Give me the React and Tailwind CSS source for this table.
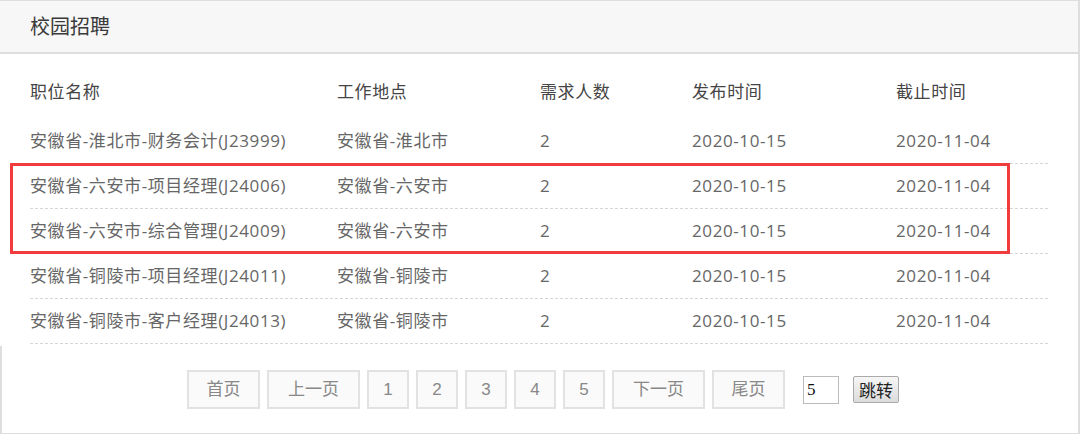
import React from "react";

const cols = ["w-[307px]", "w-[203px]", "w-[152px]", "w-[204px]", "w-[152px]"];

const jobs = [
  ["安徽省-淮北市-财务会计(J23999)", "安徽省-淮北市", "2", "2020-10-15", "2020-11-04"],
  ["安徽省-六安市-项目经理(J24006)", "安徽省-六安市", "2", "2020-10-15", "2020-11-04"],
  ["安徽省-六安市-综合管理(J24009)", "安徽省-六安市", "2", "2020-10-15", "2020-11-04"],
  ["安徽省-铜陵市-项目经理(J24011)", "安徽省-铜陵市", "2", "2020-10-15", "2020-11-04"],
  ["安徽省-铜陵市-客户经理(J24013)", "安徽省-铜陵市", "2", "2020-10-15", "2020-11-04"],
];

const pages = [
  { label: "首页", w: "w-[73px]" },
  { label: "上一页", w: "w-[93px]" },
  { label: "1", w: "w-[42px]" },
  { label: "2", w: "w-[42px]" },
  { label: "3", w: "w-[42px]" },
  { label: "4", w: "w-[42px]" },
  { label: "5", w: "w-[42px]" },
  { label: "下一页", w: "w-[93px]" },
  { label: "尾页", w: "w-[73px]" },
];

export default function App() {
  return (
    <div className="w-[1080px] h-[434px] bg-white font-['Segoe_UI','Open_Sans','Noto_Sans_CJK_SC',sans-serif]">
      <div className="h-[434px] border-t border-r-2 border-b border-[#dedede] flex flex-col">
        <div className="h-[53px] bg-[#f7f7f7] border-b-2 border-[#dedede] flex items-center pl-[30px]">
          <span className="text-[20px] text-[#3a3a3a]">校园招聘</span>
        </div>

        <div className="relative mx-[30px] mt-[16px] text-[17px] tracking-[0.6px]">
          <div className="flex h-[49px] items-center pb-[6px] text-[#444]">
            <div className={cols[0]}>职位名称</div>
            <div className={cols[1]}>工作地点</div>
            <div className={cols[2]}>需求人数</div>
            <div className={cols[3]}>发布时间</div>
            <div className={cols[4]}>截止时间</div>
          </div>
          {jobs.map((row, i) => (
            <div
              key={i}
              className="flex h-[45px] items-center border-b border-dashed border-[#d6d6d6] text-[#666]"
            >
              {row.map((cell, j) => (
                <div key={j} className={cols[j]}>
                  {cell}
                </div>
              ))}
            </div>
          ))}
          <div className="absolute left-[-20px] top-[93px] w-[1000px] h-[91px] border-[3px] border-[#f03c3c] pointer-events-none" />
        </div>

        <div className="flex-1 border-l-2 border-[#dedede] mt-[2px] flex items-start pt-[24px] pl-[185px]">
          <div className="flex items-center gap-[7px]">
            {pages.map((p) => (
              <button
                key={p.label}
                className={`${p.w} h-[39px] border-2 border-[#e2e2e2] bg-[#fafafa] text-[17px] text-[#888] font-['Liberation_Sans','Noto_Sans_CJK_SC',sans-serif]`}
              >
                {p.label}
              </button>
            ))}
            <input
              defaultValue="5"
              className="ml-[11px] w-[36px] h-[28px] border border-[#bbb] px-[3px] text-[17px] text-[#111] font-['Liberation_Serif',serif] outline-none"
            />
            <button className="ml-[7px] w-[46px] h-[27px] border border-[#aaa] rounded-[2px] bg-gradient-to-b from-[#f6f6f6] to-[#dcdcdc] text-[17px] text-[#222] leading-none font-['Noto_Sans_CJK_SC',sans-serif]">
              跳转
            </button>
          </div>
        </div>
      </div>
    </div>
  );
}
